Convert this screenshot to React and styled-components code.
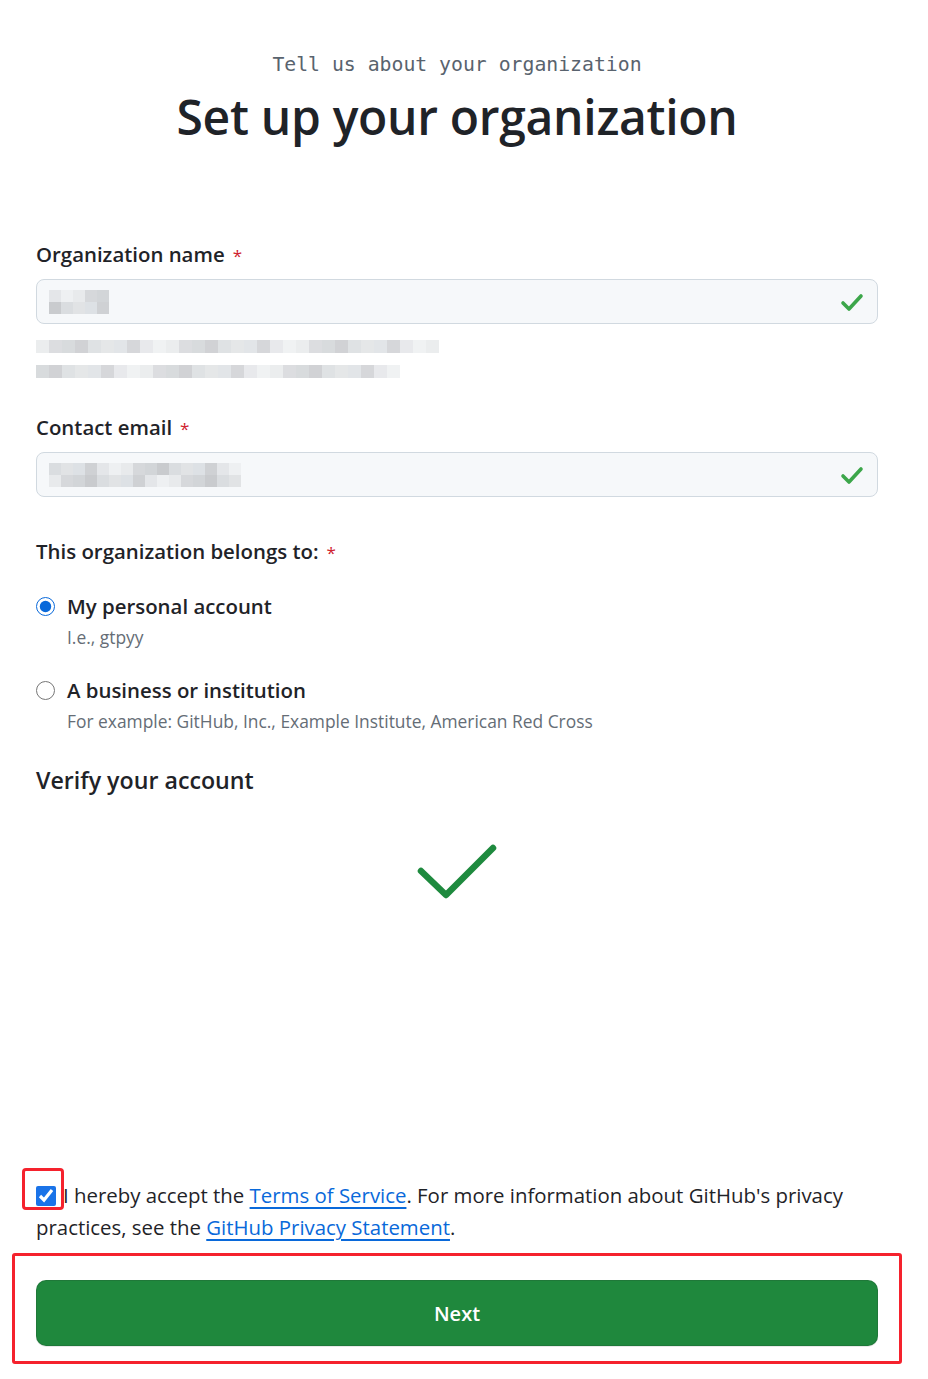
import React from "react";
import styled, { createGlobalStyle } from "styled-components";

const Global = createGlobalStyle`
  html, body { margin: 0; padding: 0; background: #fff; }
  body { font-family: "Open Sans", "Noto Sans", sans-serif; color: #1f2328; }
  * { box-sizing: border-box; }
`;

const Page = styled.main`
  width: 842px;
  margin-left: 36px;
  padding-top: 51px;
  padding-bottom: 15px;
  display: flex;
  flex-direction: column;
`;

const Header = styled.header`
  display: flex;
  flex-direction: column;
  align-items: center;
  margin-bottom: 95px;
`;

const Eyebrow = styled.div`
  font-family: "DejaVu Sans Mono", "Liberation Mono", monospace;
  font-size: 19.8px;
  line-height: 28px;
  color: #59636e;
`;

const Title = styled.h1`
  margin: 10px 0 0 0;
  font-size: 48px;
  line-height: 56px;
  font-weight: 600;
  color: #1f2328;
  letter-spacing: -0.3px;
`;

const Field = styled.section`
  display: flex;
  flex-direction: column;
  margin-bottom: ${(p) => p.$mb || 0}px;
`;

const Label = styled.label`
  display: flex;
  align-items: baseline;
  height: 28px;
  font-size: 20.4px;
  line-height: 28px;
  font-weight: 600;
  margin-bottom: ${(p) => p.$mb || 11}px;
`;

const Req = styled.span`
  color: #cf222e;
  margin-left: 8px;
  font-size: 17px;
  font-weight: 400;
  line-height: 28px;
`;

const InputBox = styled.div`
  height: 45px;
  border: 1px solid #d1d9e0;
  border-radius: 8px;
  background: #f6f8fa;
  display: flex;
  align-items: center;
  justify-content: space-between;
  padding: 0 12px 0 12px;
`;

const Mosaic = styled.div`
  display: grid;
  grid-template-columns: repeat(${(p) => p.$cols}, ${(p) => p.$cell}px);
  grid-auto-rows: ${(p) => p.$cell}px;
  opacity: ${(p) => p.$op || 1};
`;

const Cell = styled.span`
  background: ${(p) => p.$c};
`;

const Hint = styled.div`
  display: flex;
  flex-direction: column;
  gap: 12px;
  margin-top: 16px;
`;

const RadioRow = styled.label`
  display: grid;
  grid-template-columns: 20px 1fr;
  column-gap: 11px;
  align-items: center;
  margin-bottom: ${(p) => p.$mb || 0}px;
`;

const Radio = styled.input`
  width: 19px;
  height: 19px;
  margin: 0;
  accent-color: #0969da;
`;

const Option = styled.span`
  font-size: 20.4px;
  line-height: 30px;
  font-weight: 600;
`;

const Desc = styled.span`
  grid-column: 2;
  font-size: 17.4px;
  line-height: 32px;
  color: #656d76;
`;

const SubHeading = styled.h2`
  margin: 0;
  font-size: 23.2px;
  line-height: 30px;
  font-weight: 600;
`;

const CheckArea = styled.div`
  display: flex;
  justify-content: center;
  margin-top: 46px;
  height: 338px;
`;

const Terms = styled.p`
  margin: 0;
  font-size: 20.4px;
  line-height: 32px;
  color: #1f2328;
`;

const CheckMark = styled.span`
  position: relative;
  display: inline-block;
  vertical-align: -3px;
  width: 20px;
  height: 20px;
  margin-right: 7px;
`;

const Highlight = styled.span`
  position: absolute;
  left: -14px;
  top: -14px;
  width: 42px;
  height: 42px;
  border: 3px solid #f5222d;
  border-radius: 4px;
  pointer-events: none;
`;

const Box = styled.input`
  width: 20px;
  height: 20px;
  margin: 0;
  accent-color: #1a73e8;
`;

const Link = styled.a`
  color: #0969da;
  text-decoration: underline;
  text-underline-offset: 4px;
  text-decoration-thickness: 1.5px;
`;

const ButtonFrame = styled.div`
  margin: 10px -24px 0 -24px;
  padding: 24px 21px 15px 21px;
  border: 3px solid #f5222d;
  border-radius: 3px;
`;

const NextButton = styled.button`
  display: block;
  width: 100%;
  height: 66px;
  border: 1px solid rgba(31, 35, 40, 0.15);
  border-radius: 10px;
  background: #1f883d;
  color: #fff;
  font-family: "Open Sans", "Noto Sans", sans-serif;
  font-size: 20px;
  font-weight: 600;
  box-shadow: 0 1px 0 rgba(31, 35, 40, 0.1);
`;

const SmallCheck = () => (
  <svg width="26" height="22" viewBox="0 0 26 22" aria-hidden="true">
    <polyline points="4,12 10,18 22,5" fill="none" stroke="#3ca64a" strokeWidth="3.6" strokeLinecap="round" strokeLinejoin="round" />
  </svg>
);

const BigCheck = () => (
  <svg width="90" height="66" viewBox="0 0 90 66" aria-hidden="true">
    <polyline points="9,30 34,54 81,7" fill="none" stroke="#1e8a3e" strokeWidth="6.5" strokeLinecap="round" strokeLinejoin="round" />
  </svg>
);

const shades = ["#e4e6e9", "#d6d8db", "#dadde0", "#cfd1d4", "#e8eaec", "#c9cbce", "#dde1e5", "#eef0f2", "#d2d5d8", "#e1e3e5"];

const Redacted = ({ cols, rows, cell, seed = 1, op }) => {
  const cells = [];
  let s = seed;
  for (let i = 0; i < cols * rows; i++) {
    s = (s * 9301 + 49297) % 233280;
    cells.push(<Cell key={i} $c={shades[s % shades.length]} />);
  }
  return (
    <Mosaic $cols={cols} $cell={cell} $op={op}>
      {cells}
    </Mosaic>
  );
};

export default function App() {
  return (
    <>
      <Global />
      <Page>
        <Header>
          <Eyebrow>Tell us about your organization</Eyebrow>
          <Title>Set up your organization</Title>
        </Header>

        <Field $mb={35}>
          <Label>
            Organization name<Req>*</Req>
          </Label>
          <InputBox>
            <Redacted cols={5} rows={2} cell={12} seed={3} />
            <SmallCheck />
          </InputBox>
          <Hint>
            <Redacted cols={31} rows={1} cell={13} seed={7} op={0.85} />
            <Redacted cols={28} rows={1} cell={13} seed={11} op={0.85} />
          </Hint>
        </Field>

        <Field $mb={40}>
          <Label>
            Contact email<Req>*</Req>
          </Label>
          <InputBox>
            <Redacted cols={16} rows={2} cell={12} seed={5} />
            <SmallCheck />
          </InputBox>
        </Field>

        <Field $mb={28}>
          <Label $mb={26}>
            This organization belongs to:<Req>*</Req>
          </Label>
          <RadioRow $mb={22}>
            <Radio type="radio" name="owner" defaultChecked />
            <Option>My personal account</Option>
            <Desc>I.e., gtpyy</Desc>
          </RadioRow>
          <RadioRow>
            <Radio type="radio" name="owner" />
            <Option>A business or institution</Option>
            <Desc>For example: GitHub, Inc., Example Institute, American Red Cross</Desc>
          </RadioRow>
        </Field>

        <SubHeading>Verify your account</SubHeading>
        <CheckArea>
          <BigCheck />
        </CheckArea>

        <Terms>
          <CheckMark>
            <Box type="checkbox" defaultChecked />
            <Highlight />
          </CheckMark>
          I hereby accept the <Link href="#">Terms of Service</Link>. For more information about GitHub's privacy
          practices, see the <Link href="#">GitHub Privacy Statement</Link>.
        </Terms>

        <ButtonFrame>
          <NextButton type="button">Next</NextButton>
        </ButtonFrame>
      </Page>
    </>
  );
}
